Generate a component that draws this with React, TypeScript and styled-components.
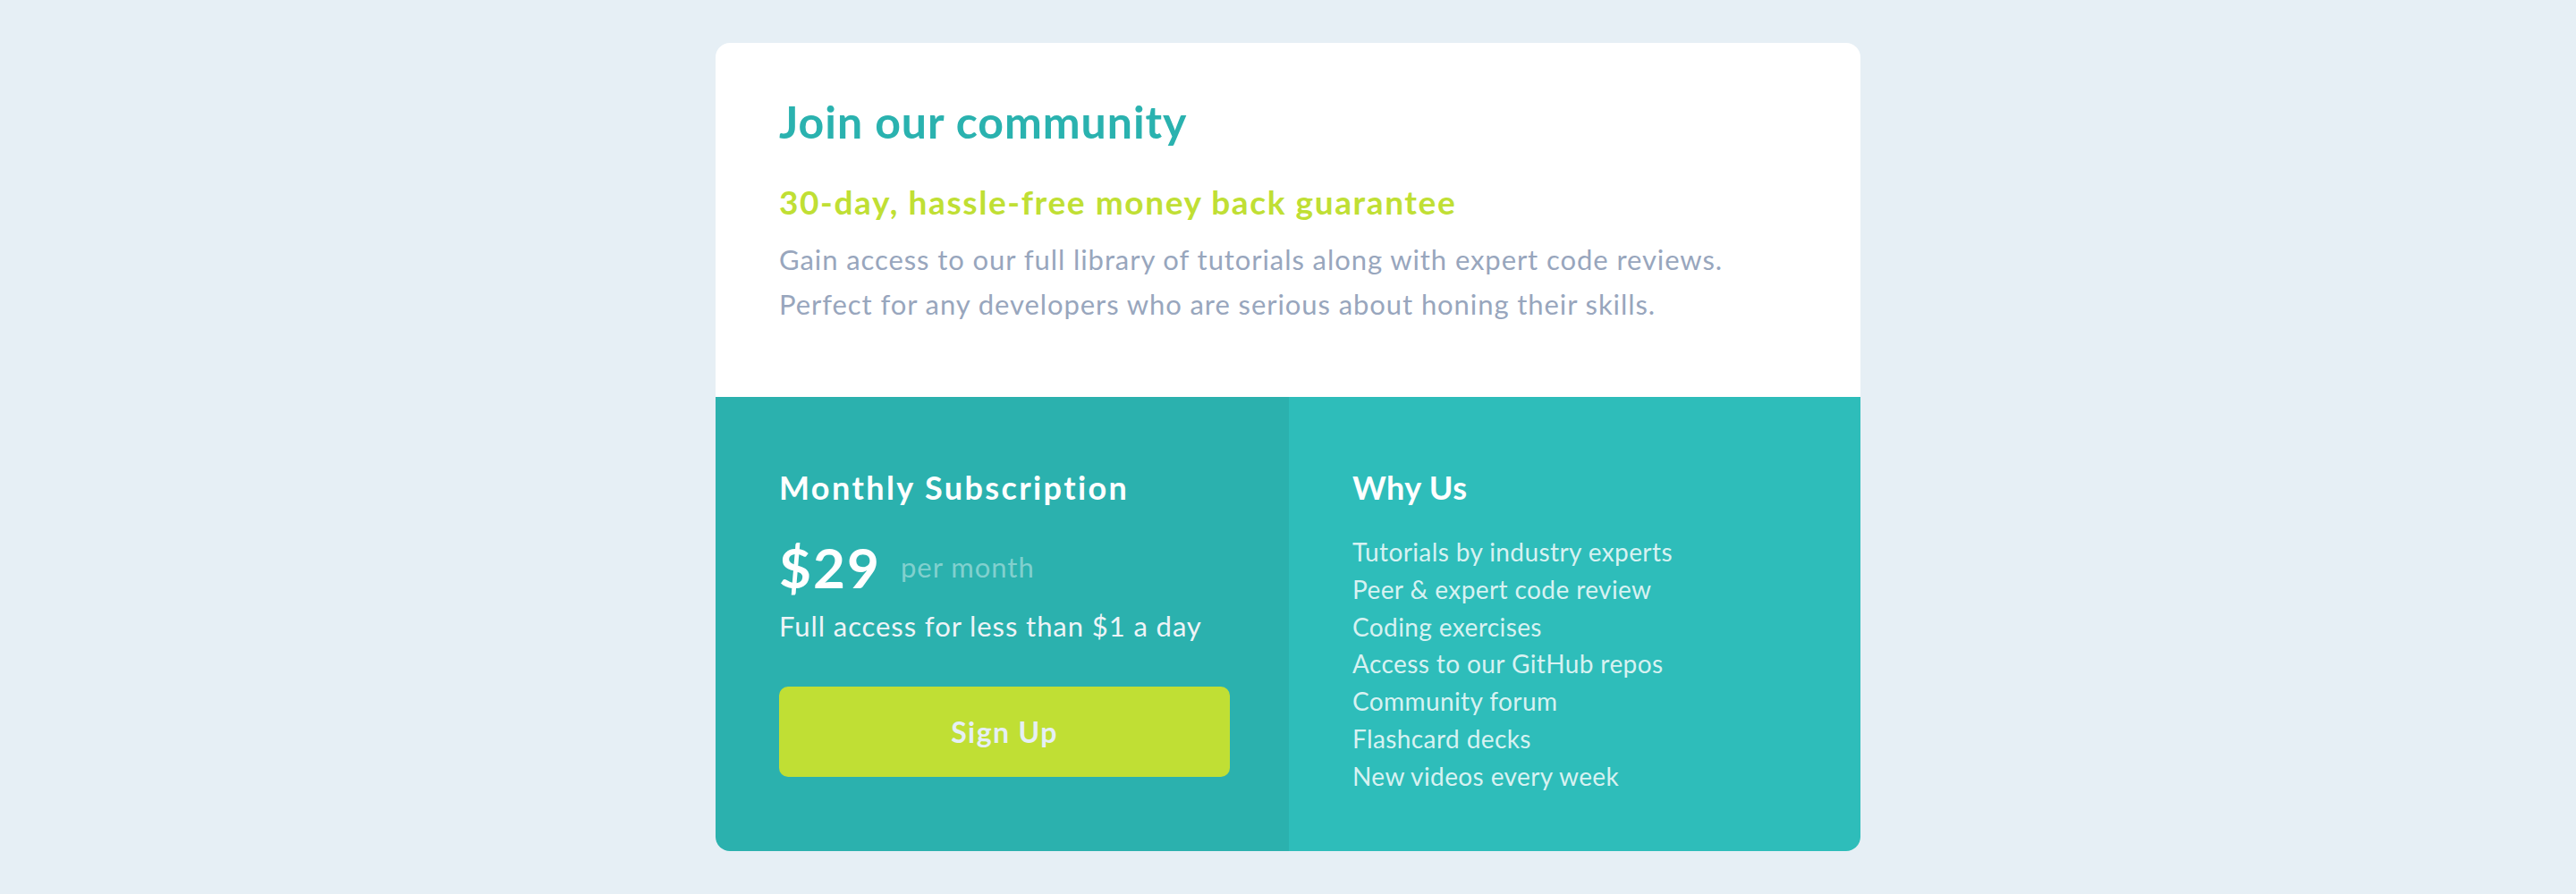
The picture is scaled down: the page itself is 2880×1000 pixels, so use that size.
import React from "react";
import styled, { createGlobalStyle } from "styled-components";

const GlobalStyle = createGlobalStyle`
  html, body { margin: 0; padding: 0; }
  body {
    background: #e6eff5;
    font-family: Lato, "Open Sans", sans-serif;
  }
`;

const Page = styled.main`
  min-height: 1000px;
  display: flex;
  justify-content: center;
  align-items: flex-start;
  padding-top: 48px;
  box-sizing: border-box;
`;

const Card = styled.section`
  width: 1280px;
  border-radius: 16px;
  overflow: hidden;
  background: #ffffff;
  display: grid;
  grid-template-columns: 1fr 1fr;
`;

const Intro = styled.div`
  grid-column: 1 / -1;
  padding: 60px 72px 79px 71px;
  display: flex;
  flex-direction: column;
`;

const Title = styled.h1`
  margin: 0;
  font-size: 50px;
  line-height: 56px;
  letter-spacing: 0.95px;
  font-weight: 700;
  color: #2ab2af;
`;

const Guarantee = styled.h2`
  margin: 40px 0 0;
  font-size: 37px;
  line-height: 44px;
  letter-spacing: 1.6px;
  font-weight: 700;
  color: #c0df34;
`;

const Lead = styled.p`
  margin: 17px 0 0;
  font-size: 31px;
  line-height: 50px;
  letter-spacing: 0.92px;
  color: #98a6bd;
`;

const Panel = styled.div<{ $tone: "dark" | "light" }>`
  background: ${(p) => (p.$tone === "dark" ? "#2bb1ae" : "#2ebdba")};
  padding: 79px 66px 62px 71px;
  display: flex;
  flex-direction: column;
  color: #ffffff;
`;

const PanelTitle = styled.h3<{ $spacing: number }>`
  margin: 0;
  font-size: 36px;
  line-height: 44px;
  letter-spacing: ${(p) => p.$spacing}px;
  font-weight: 700;
  color: #ffffff;
`;

const PriceRow = styled.div`
  margin-top: 32px;
  display: flex;
  align-items: center;
  gap: 22px;
`;

const Price = styled.span`
  font-size: 62px;
  line-height: 70px;
  letter-spacing: 2px;
  font-weight: 700;
  color: #ffffff;
`;

const Per = styled.span`
  font-size: 31px;
  letter-spacing: 1px;
  color: rgba(255, 255, 255, 0.42);
`;

const Note = styled.p`
  margin: 11px 0 0;
  font-size: 31px;
  line-height: 40px;
  letter-spacing: 0.92px;
  color: #eef4f7;
`;

const SignUp = styled.button`
  margin-top: 48px;
  width: 504px;
  height: 101px;
  border: none;
  border-radius: 10px;
  background: #c0df34;
  color: #e6eff5;
  font-family: inherit;
  font-size: 32px;
  letter-spacing: 1.4px;
  font-weight: 700;
  cursor: pointer;
`;

const List = styled.ul`
  list-style: none;
  margin: 30px 0 0;
  padding: 0;
`;

const Item = styled.li`
  font-size: 28px;
  line-height: 41.8px;
  letter-spacing: 0.4px;
  color: rgba(255, 255, 255, 0.82);
`;

const reasons = [
  "Tutorials by industry experts",
  "Peer & expert code review",
  "Coding exercises",
  "Access to our GitHub repos",
  "Community forum",
  "Flashcard decks",
  "New videos every week",
];

export default function App() {
  return (
    <>
      <GlobalStyle />
      <Page>
        <Card>
          <Intro>
            <Title>Join our community</Title>
            <Guarantee>30-day, hassle-free money back guarantee</Guarantee>
            <Lead>
              Gain access to our full library of tutorials along with expert code reviews.
              <br />
              Perfect for any developers who are serious about honing their skills.
            </Lead>
          </Intro>
          <Panel $tone="dark">
            <PanelTitle $spacing={2.4}>Monthly Subscription</PanelTitle>
            <PriceRow>
              <Price>$29</Price>
              <Per>per month</Per>
            </PriceRow>
            <Note>Full access for less than $1 a day</Note>
            <SignUp>Sign Up</SignUp>
          </Panel>
          <Panel $tone="light">
            <PanelTitle $spacing={0.4}>Why Us</PanelTitle>
            <List>
              {reasons.map((r) => (
                <Item key={r}>{r}</Item>
              ))}
            </List>
          </Panel>
        </Card>
      </Page>
    </>
  );
}
